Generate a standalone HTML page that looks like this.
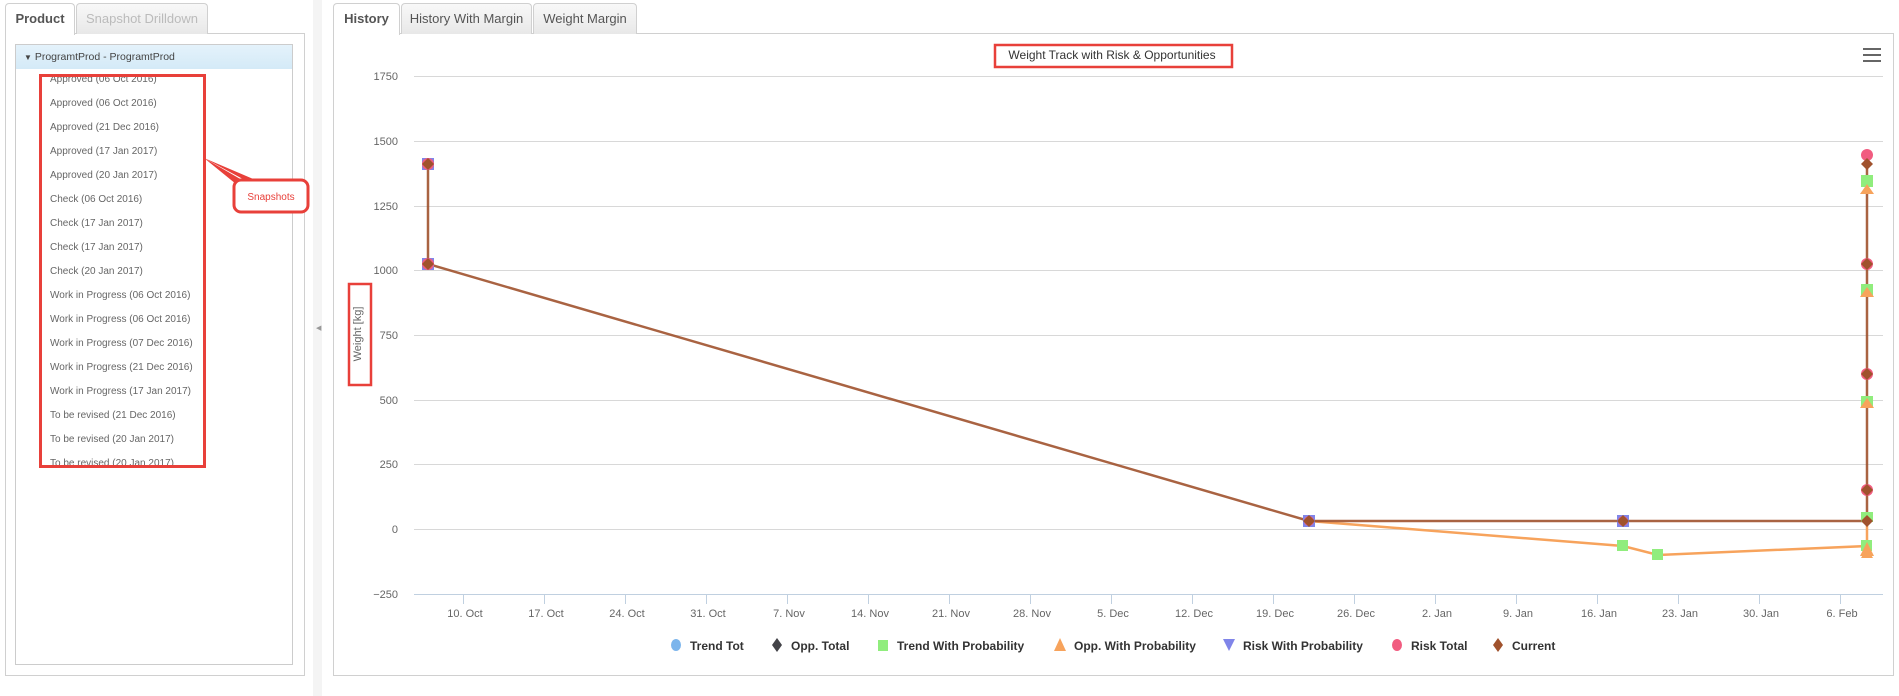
<!DOCTYPE html>
<html><head><meta charset="utf-8">
<style>
*{box-sizing:border-box;margin:0;padding:0}
body{width:1899px;height:696px;background:#fff;font-family:"Liberation Sans",Arial,sans-serif;position:relative;overflow:hidden}
.abs{position:absolute}
.tab{position:absolute;top:3px;height:31px;border:1px solid #d0d0d0;border-bottom:none;border-radius:4px 4px 0 0;background:linear-gradient(#f8f8f8,#e8e8e8);font-size:13px;color:#555;text-align:center;line-height:30px}
.tab.act{background:#fff;height:32px;font-weight:bold;color:#555}
.item{position:absolute;left:50px;font-size:10px;color:#666}
</style></head><body>
<div class="abs" style="left:5px;top:33px;width:300px;height:643px;border:1px solid #d0d0d0"></div>
<div class="tab act" style="left:5px;width:70px">Product</div>
<div class="tab" style="left:76px;width:132px;color:#bbb">Snapshot Drilldown</div>
<div class="abs" style="left:15px;top:44px;width:278px;height:621px;border:1px solid #ccc"></div>
<div class="abs" style="left:16px;top:45px;width:276px;height:24px;background:linear-gradient(#e4f2fb,#d4eaf7);font-size:10.5px;color:#444;line-height:24px;padding-left:8px"><span style="font-size:8px">&#9660;</span> ProgramtProd - ProgramtProd</div>
<div class="item" style="top:74px">Approved (06 Oct 2016)</div>
<div class="item" style="top:98px">Approved (06 Oct 2016)</div>
<div class="item" style="top:122px">Approved (21 Dec 2016)</div>
<div class="item" style="top:146px">Approved (17 Jan 2017)</div>
<div class="item" style="top:170px">Approved (20 Jan 2017)</div>
<div class="item" style="top:194px">Check (06 Oct 2016)</div>
<div class="item" style="top:218px">Check (17 Jan 2017)</div>
<div class="item" style="top:242px">Check (17 Jan 2017)</div>
<div class="item" style="top:266px">Check (20 Jan 2017)</div>
<div class="item" style="top:290px">Work in Progress (06 Oct 2016)</div>
<div class="item" style="top:314px">Work in Progress (06 Oct 2016)</div>
<div class="item" style="top:338px">Work in Progress (07 Dec 2016)</div>
<div class="item" style="top:362px">Work in Progress (21 Dec 2016)</div>
<div class="item" style="top:386px">Work in Progress (17 Jan 2017)</div>
<div class="item" style="top:410px">To be revised (21 Dec 2016)</div>
<div class="item" style="top:434px">To be revised (20 Jan 2017)</div>
<div class="item" style="top:458px;height:9px;overflow:hidden">To be revised (20 Jan 2017)</div>
<div class="abs" style="left:39px;top:74px;width:167px;height:394px;border:3px solid #e8403a"></div>
<svg class="abs" style="left:0;top:0" width="330" height="696">
<polygon points="204,158 242,180 236,184" fill="#e8403a"/>
<polygon points="204,158 258,181 252,184" fill="#e8403a"/>
<rect x="234" y="180" width="74" height="32" rx="7" fill="#fff" stroke="#e8403a" stroke-width="3"/>
<text x="271" y="200" font-size="10" fill="#e8403a" text-anchor="middle" font-family="Liberation Sans">Snapshots</text>
<rect x="313" y="0" width="9" height="696" fill="#f4f4f4"/>
<text x="316" y="330" font-size="7" fill="#999">&#9664;</text>
</svg>
<div class="abs" style="left:333px;top:33px;width:1561px;height:643px;border:1px solid #d0d0d0"></div>
<div class="tab act" style="left:333px;width:67px">History</div>
<div class="tab" style="left:401px;width:131px">History With Margin</div>
<div class="tab" style="left:533px;width:104px">Weight Margin</div>
<svg class="abs" style="left:0;top:0" width="1899" height="696" font-family="Liberation Sans">
<text x="1112" y="59" font-size="12" fill="#333" text-anchor="middle">Weight Track with Risk &amp; Opportunities</text>
<rect x="995" y="45" width="237" height="22" fill="none" stroke="#e8403a" stroke-width="2.5"/>
<g stroke="#666" stroke-width="2"><line x1="1863" y1="49" x2="1881" y2="49"/><line x1="1863" y1="55" x2="1881" y2="55"/><line x1="1863" y1="61" x2="1881" y2="61"/></g>
<g stroke="#d8d8d8" stroke-width="1">
<line x1="414" y1="76.5" x2="1883" y2="76.5"/><line x1="414" y1="141.5" x2="1883" y2="141.5"/><line x1="414" y1="206.5" x2="1883" y2="206.5"/><line x1="414" y1="270.5" x2="1883" y2="270.5"/><line x1="414" y1="335.5" x2="1883" y2="335.5"/><line x1="414" y1="400.5" x2="1883" y2="400.5"/><line x1="414" y1="464.5" x2="1883" y2="464.5"/><line x1="414" y1="529.5" x2="1883" y2="529.5"/>
</g>
<line x1="414" y1="594.5" x2="1883" y2="594.5" stroke="#c0d0e0"/>
<g font-size="11" fill="#666" text-anchor="end">
<text x="398" y="80">1750</text><text x="398" y="145">1500</text><text x="398" y="210">1250</text><text x="398" y="274">1000</text><text x="398" y="339">750</text><text x="398" y="404">500</text><text x="398" y="468">250</text><text x="398" y="533">0</text><text x="398" y="598">−250</text>
</g>
<text transform="translate(361,334) rotate(-90)" font-size="11" fill="#666" text-anchor="middle">Weight [kg]</text>
<rect x="349" y="284" width="22" height="101" fill="none" stroke="#e8403a" stroke-width="2.5"/>
<g stroke="#c0d0e0"><line x1="463.5" y1="595" x2="463.5" y2="604"/><line x1="544.5" y1="595" x2="544.5" y2="604"/><line x1="625.5" y1="595" x2="625.5" y2="604"/><line x1="706.5" y1="595" x2="706.5" y2="604"/><line x1="787.5" y1="595" x2="787.5" y2="604"/><line x1="868.5" y1="595" x2="868.5" y2="604"/><line x1="949.5" y1="595" x2="949.5" y2="604"/><line x1="1030.5" y1="595" x2="1030.5" y2="604"/><line x1="1111.5" y1="595" x2="1111.5" y2="604"/><line x1="1192.5" y1="595" x2="1192.5" y2="604"/><line x1="1273.5" y1="595" x2="1273.5" y2="604"/><line x1="1354.5" y1="595" x2="1354.5" y2="604"/><line x1="1435.5" y1="595" x2="1435.5" y2="604"/><line x1="1516.5" y1="595" x2="1516.5" y2="604"/><line x1="1597.5" y1="595" x2="1597.5" y2="604"/><line x1="1678.5" y1="595" x2="1678.5" y2="604"/><line x1="1759.5" y1="595" x2="1759.5" y2="604"/><line x1="1840.5" y1="595" x2="1840.5" y2="604"/></g>
<g font-size="11" fill="#666" text-anchor="middle">
<text x="465" y="617">10. Oct</text><text x="546" y="617">17. Oct</text><text x="627" y="617">24. Oct</text><text x="708" y="617">31. Oct</text><text x="789" y="617">7. Nov</text><text x="870" y="617">14. Nov</text><text x="951" y="617">21. Nov</text><text x="1032" y="617">28. Nov</text><text x="1113" y="617">5. Dec</text><text x="1194" y="617">12. Dec</text><text x="1275" y="617">19. Dec</text><text x="1356" y="617">26. Dec</text><text x="1437" y="617">2. Jan</text><text x="1518" y="617">9. Jan</text><text x="1599" y="617">16. Jan</text><text x="1680" y="617">23. Jan</text><text x="1761" y="617">30. Jan</text><text x="1842" y="617">6. Feb</text>
</g>
<polyline points="1309,521 1623,546 1658,555 1867,546 1867,521" fill="none" stroke="#f7a35c" stroke-width="2.5"/>
<polyline points="428,164 428,264 1309,521 1867,521 1867,164" fill="none" stroke="#a0522d" stroke-width="2.5" stroke-opacity="0.9"/>
<g fill="#8085e9"><rect x="422" y="158" width="12" height="12"/><rect x="422" y="258" width="12" height="12"/><rect x="1303" y="515" width="12" height="12"/><rect x="1617" y="515" width="12" height="12"/></g>
<g fill="#90ed7d"><rect x="1617" y="540" width="11" height="11"/><rect x="1652" y="549" width="11" height="11"/><rect x="1861" y="540" width="11" height="11"/><rect x="1861" y="175" width="12" height="12"/><rect x="1861" y="284" width="12" height="12"/><rect x="1861" y="396" width="12" height="12"/><rect x="1861" y="512" width="12" height="10"/></g>
<g fill="#f7a35c"><polygon points="1867,542 1874,556 1860,556"/><polygon points="1867,184 1874,194 1860,194"/><polygon points="1867,287 1874,297 1860,297"/><polygon points="1867,398 1874,408 1860,408"/><polygon points="1867,548 1873,558 1861,558"/></g>
<g fill="#f15c80"><circle cx="1867" cy="155" r="6"/><circle cx="1867" cy="264" r="6"/><circle cx="1867" cy="374" r="6"/><circle cx="1867" cy="490" r="6"/><circle cx="428" cy="164" r="6"/><circle cx="428" cy="264" r="6"/><circle cx="1309" cy="521" r="5"/><circle cx="1623" cy="521" r="5"/></g>
<g fill="#a0522d"><polygon points="428,158 434,164 428,170 422,164"/><polygon points="428,258 434,264 428,270 422,264"/><polygon points="1309,515 1315,521 1309,527 1303,521"/><polygon points="1623,515 1629,521 1623,527 1617,521"/><polygon points="1867,158 1873,164 1867,170 1861,164"/><polygon points="1867,258 1873,264 1867,270 1861,264"/><polygon points="1867,368 1873,374 1867,380 1861,374"/><polygon points="1867,484 1873,490 1867,496 1861,490"/><polygon points="1867,515 1873,521 1867,527 1861,521"/></g>
<g font-size="12" font-weight="bold" fill="#333">
<ellipse cx="676" cy="645" rx="5" ry="6" fill="#7cb5ec"/><text x="690" y="650">Trend Tot</text>
<polygon points="777,638 782,645 777,652 772,645" fill="#434348"/><text x="791" y="650">Opp. Total</text>
<rect x="878" y="640" width="10" height="11" fill="#90ed7d"/><text x="897" y="650">Trend With Probability</text>
<polygon points="1060,638 1066,651 1054,651" fill="#f7a35c"/><text x="1074" y="650">Opp. With Probability</text>
<polygon points="1223,639 1235,639 1229,651" fill="#8085e9"/><text x="1243" y="650">Risk With Probability</text>
<ellipse cx="1397" cy="645" rx="5" ry="6" fill="#f15c80"/><text x="1411" y="650">Risk Total</text>
<polygon points="1498,638 1503,645 1498,652 1493,645" fill="#a0522d"/><text x="1512" y="650">Current</text>
</g>
</svg>
</body></html>
